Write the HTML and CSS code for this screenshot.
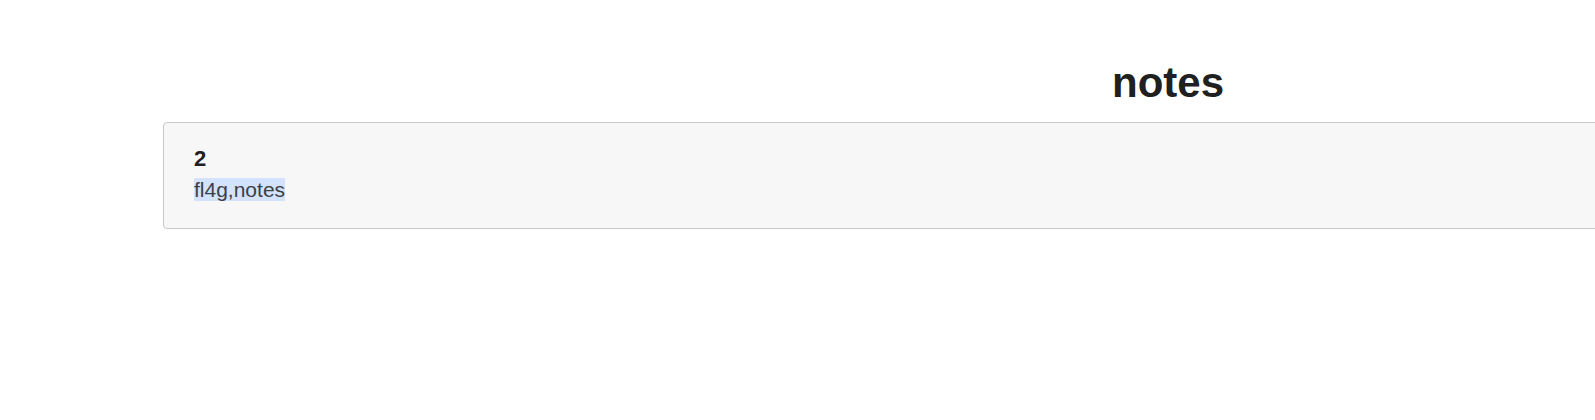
FILE: index.html
```html
<!DOCTYPE html>
<html lang="en">
<head>
<meta charset="utf-8">
<title>notes</title>
<link rel="stylesheet" href="styles.css">
</head>
<body>
<div class="page">
  <h1 class="title">notes</h1>
  <div class="note-card">
    <div class="note-id">2</div>
    <div class="note-tags"><span class="hl">fl4g,notes</span></div>
  </div>
</div>
</body>
</html>
```
FILE: styles.css
```css
html, body {
  margin: 0;
  padding: 0;
  overflow: hidden;
  background: #ffffff;
  font-family: "Liberation Sans", Arial, sans-serif;
}
.page {
  margin-left: 163px;
  width: 2010px;
  padding-top: 59px;
}
.title {
  margin: 0 0 15px 0;
  font-size: 42px;
  font-weight: bold;
  line-height: 48px;
  text-align: center;
  color: #202020;
}
.note-card {
  background: #f7f7f7;
  border: 1px solid #c8c8c8;
  border-radius: 4px;
  padding: 23px 30px 26px 30px;
}
.note-id {
  font-size: 22px;
  font-weight: bold;
  line-height: 25px;
  color: #202020;
}
.note-tags {
  margin-top: 7px;
  font-size: 21px;
  line-height: 24px;
  color: #3c4043;
}
.hl {
  background: #d3e3fd;
}
```
